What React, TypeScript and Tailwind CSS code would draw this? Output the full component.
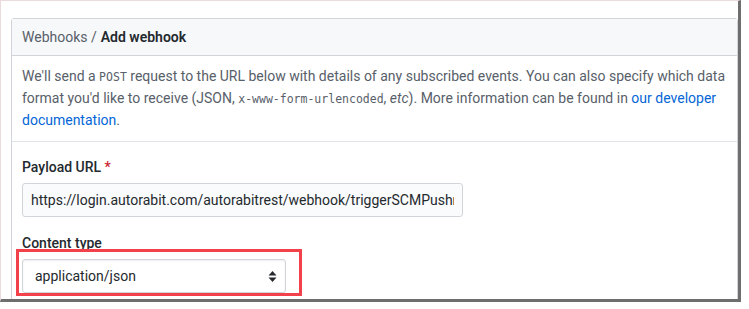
export default function App() {
  return (
    <div className="w-[749px] h-[309px] bg-white font-['Segoe_UI','Roboto','Noto_Sans',sans-serif] text-[14px] text-[#24292e]">
      {/* screenshot frame */}
      <div className="relative w-[741px] h-[302px] overflow-hidden border-l border-t border-[#eadcdc] border-r-[3px] border-r-[#6e6e6e] border-b-[3px] border-b-[#6e6e6e] pl-[10px] pt-[17px]">
        <div className="w-[727px] rounded-t-[3px] border border-[#d1d5da]">
          <div className="h-[37px] flex items-center px-[10px] bg-[#f6f8fa] border-b border-[#d1d5da]">
            <span className="text-[#586069]">Webhooks /</span>
            <span className="ml-[4px] font-semibold">Add webhook</span>
          </div>

          <div className="px-[10px] py-[10px] leading-[21px] text-[#586069] whitespace-nowrap border-b border-[#e1e4e8]">
            We'll send a <code className="font-['DejaVu_Sans_Mono',monospace] text-[11.5px]">POST</code> request to the URL below with details of any subscribed events. You can also specify which data
            <br />
            format you'd like to receive (JSON, <code className="font-['DejaVu_Sans_Mono',monospace] text-[11.5px]">x-www-form-urlencoded</code>, <em>etc</em>). More information can be found in{" "}
            <a className="text-[#0366d6]">our developer</a>
            <br />
            <a className="text-[#0366d6]">documentation</a>.
          </div>

          <div className="px-[10px] pt-[15px] h-[200px]">
            <div className="leading-[21px] font-medium text-[#24292e]">
              Payload URL <span className="text-[#cb2431]">*</span>
            </div>
            <input
              readOnly
              value="https://login.autorabit.com/autorabitrest/webhook/triggerSCMPushrequest"
              className="mt-[5px] w-[441px] h-[34px] px-[8px] rounded-[3px] border border-[#d1d5da] bg-[#fafbfc] text-[14px] text-[#24292e] outline-none"
            />
            <div className="mt-[16px] leading-[21px] font-medium text-[#24292e]">Content type</div>
            <div className="mt-[5px] w-[264px] h-[34px] flex items-center justify-between pl-[12px] pr-[8px] rounded-[3px] border border-[#d1d5da] bg-white shadow-[inset_0_1px_2px_rgba(27,31,35,0.075)]">
              <span>application/json</span>
              <svg width="9" height="13" viewBox="0 0 9 13" fill="#24292e">
                <path d="M4.5 1 L8.5 5.5 H0.5 Z" />
                <path d="M4.5 12 L8.5 7.5 H0.5 Z" />
              </svg>
            </div>
          </div>
        </div>

        {/* annotation box */}
        <div className="absolute left-[15px] top-[248px] w-[286px] h-[47px] border-[3px] border-[#f2414a]" />
      </div>
    </div>
  );
}
